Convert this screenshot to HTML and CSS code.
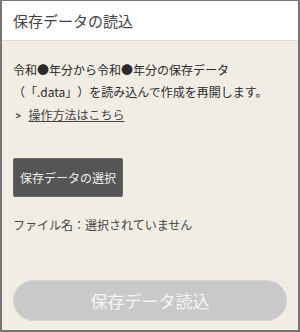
FILE: index.html
```html
<!DOCTYPE html>
<html lang="ja">
<head>
    <meta charset="UTF-8">
    <meta name="viewport" content="width=device-width, initial-scale=1.0">
    <title>保存データの読込</title>
    <link rel="stylesheet" href="styles.css">
</head>
<body>
    <div class="dialog">
        <div class="dialog-header">
            <div class="dialog-title">保存データの読込</div>
        </div>

        <div class="dialog-body">
            <p class="lead">令和●年分から令和●年分の保存データ（「.data」）を読み込んで作成を再開します。</p>
            <div class="help-link">
                <span class="chevron">&gt;</span>
                <a href="#" class="help-anchor">操作方法はこちら</a>
            </div>

            <button class="select-button">保存データの選択</button>
            <div class="file-name">ファイル名：選択されていません</div>

            <button class="load-button" disabled>保存データ読込</button>
        </div>
    </div>
</body>
</html>
```

FILE: styles.css
```css
* { margin: 0; padding: 0; box-sizing: border-box; }
body { font-family: 'Noto Sans CJK JP', 'Noto Sans', sans-serif; background: #fff; color: #333; text-spacing-trim: space-all; }
.dialog { width: 300px; height: 332px; border: 2px solid #767676; border-top-width: 1px; background: #f0eee4; display: flex; flex-direction: column; }
.dialog-header { background: white; height: 40px; border-bottom: 1px solid #dcdcdc; display: flex; align-items: center; padding: 0 11px; }
.dialog-title { font-size: 15px; color: #444; }
.dialog-body { flex: 1; display: flex; flex-direction: column; align-items: flex-start; padding: 18px 11px 9px; }
.lead { font-size: 12px; line-height: 22px; color: #2a2a2a; text-spacing-trim: space-all; }
.help-link { display: flex; align-items: center; gap: 7px; font-size: 12px; line-height: 22px; margin-top: 1px; padding-left: 2px; }
.chevron { font-size: 11px; font-weight: 700; color: #444; transform: scaleX(0.8); }
.help-anchor { color: #444; text-decoration: underline; }
.select-button { margin-top: 32px; background: #555; color: #eee; border: 1px solid #666; border-radius: 2px; font-family: inherit; font-size: 12px; height: 39px; padding: 0 6px; }
.file-name { margin-top: 18px; font-size: 12px; line-height: 20px; color: #444; }
.load-button { margin-top: auto; width: 100%; height: 41px; border: 1px solid #d4d4d4; border-radius: 21px; background: #c9c9c9; color: #f4f4f4; font-family: inherit; font-size: 17px; }
```
